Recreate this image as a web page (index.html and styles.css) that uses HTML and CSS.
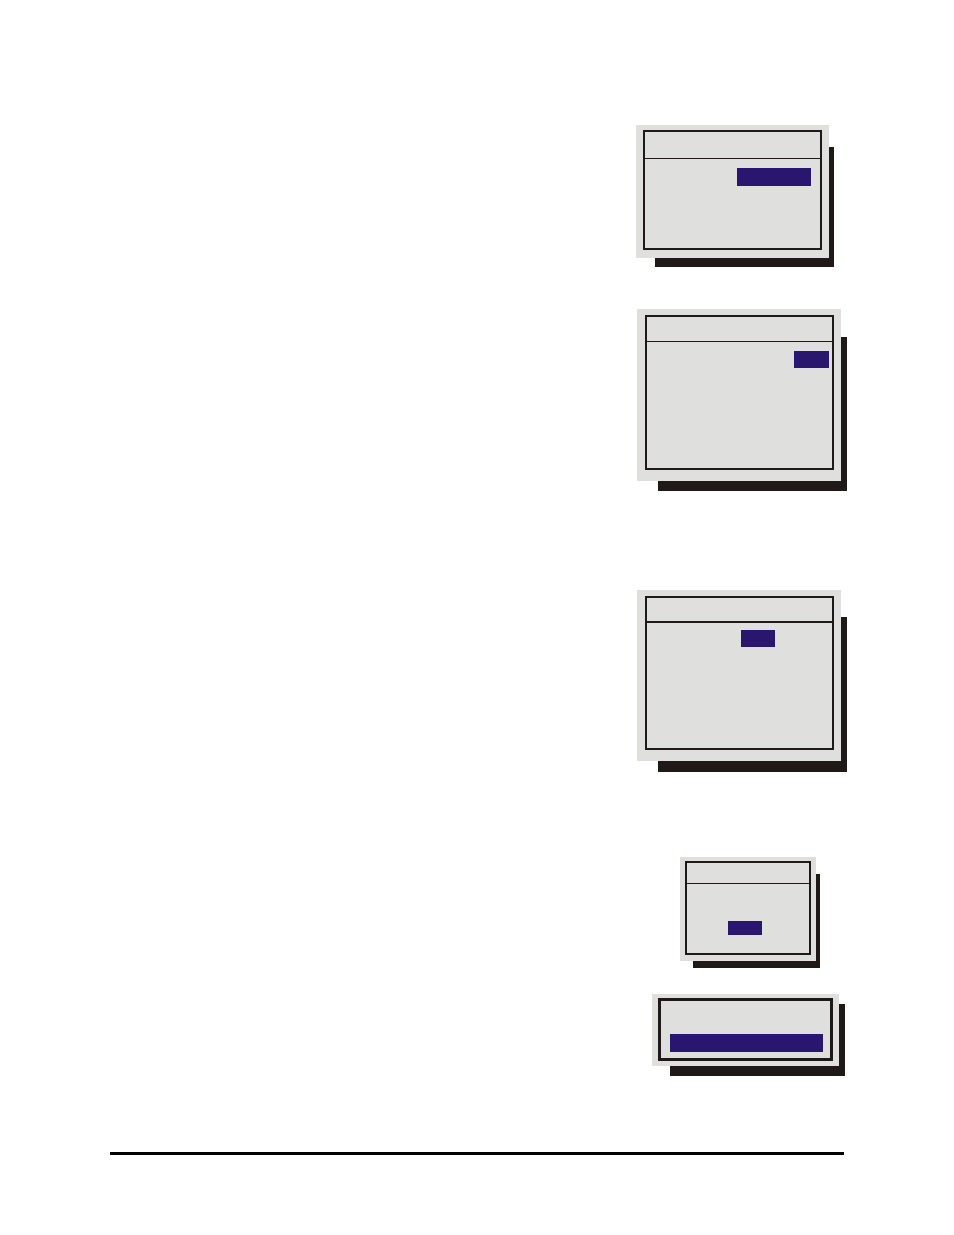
FILE: index.html
```
<!DOCTYPE html>
<html lang='en'>
<head>
	<meta charset='UTF-8'>
	<meta name='viewport' content='width=device-width, initial-scale=1.0'>
	<title>Menu Screens</title>
	<link rel="stylesheet" href="styles.css">
</head>
<body>
	<main class='screens'>
		<div class='screen screen-short'>
			<div class='panel'>
				<div class='frame'>
					<div class='title-bar'></div>
					<div class='highlight'></div>
				</div>
			</div>
		</div>

		<div class='screen screen-tall'>
			<div class='panel'>
				<div class='frame'>
					<div class='title-bar'></div>
					<div class='highlight'></div>
				</div>
			</div>
		</div>

		<div class='screen screen-tall-alt'>
			<div class='panel'>
				<div class='frame'>
					<div class='title-bar'></div>
					<div class='highlight'></div>
				</div>
			</div>
		</div>

		<div class='screen screen-small'>
			<div class='panel'>
				<div class='frame'>
					<div class='title-bar'></div>
					<div class='highlight'></div>
				</div>
			</div>
		</div>

		<div class='screen screen-wide'>
			<div class='panel'>
				<div class='frame'>
					<div class='highlight'></div>
				</div>
			</div>
		</div>
	</main>
	<hr class='footer-rule'>
</body>
</html>
```
FILE: styles.css
```
*{
	box-sizing:border-box;
}
body{
	margin:0;
	padding:125px 107px 80px 110px;
	background-color:white;
	font-family:"Liberation Sans", Arial, sans-serif;
}
.screens{
	display:flex;
	flex-direction:column;
	align-items:flex-end;
}
/* the shadow is the wrapper background, it shows below and right of the panel */
.screen{
	background-image:linear-gradient(#1f1a17, #1f1a17);
	background-repeat:no-repeat;
}
.panel{
	display:flex;
	background-color:#dfdfdd;
}
.frame{
	flex:1;
	display:flex;
	flex-direction:column;
	align-items:flex-start;
	border:2px solid #1f1a17;
}
.title-bar{
	align-self:stretch;
	height:25px;
	border-bottom:1px solid #1f1a17;
}
.highlight{
	background-color:#28166f;
}

.screen-short{
	margin:0 13px 42px 0;
	padding:0 5px 9px 0;
	background-position:19px 22px;
}
.screen-short .panel{
	width:193px;
	height:133px;
	padding:5px 7px 8px 7px;
}
.screen-short .title-bar{
	height:27px;
}
.screen-short .highlight{
	width:74px;
	height:18px;
	margin:9px 0 0 92px;
}

.screen-tall{
	margin-bottom:99px;
	padding:0 6px 10px 0;
	background-position:21px 28px;
}
.screen-tall .panel{
	width:204px;
	height:172px;
	padding:6px 7px 11px 8px;
}
.screen-tall .highlight{
	width:35px;
	height:17px;
	margin:9px 0 0 147px;
}

.screen-tall-alt{
	margin-bottom:85px;
	padding:0 6px 11px 0;
	background-position:21px 27px;
}
.screen-tall-alt .panel{
	width:204px;
	height:171px;
	padding:6px 7px 11px 8px;
}
.screen-tall-alt .title-bar{
	border-bottom-width:2px;
}
.screen-tall-alt .highlight{
	width:34px;
	height:17px;
	margin:7px 0 0 94px;
}

.screen-small{
	margin:0 27px 26px 0;
	padding:0 4px 7px 0;
	background-position:13px 17px;
}
.screen-small .panel{
	width:136px;
	height:104px;
	padding:4px 5px 6px 5px;
}
.screen-small .title-bar{
	height:21px;
}
.screen-small .highlight{
	width:34px;
	height:14px;
	margin:37px 0 0 41px;
}

.screen-wide{
	margin-right:2px;
	padding:0 6px 10px 0;
	background-position:18px 10px;
}
.screen-wide .panel{
	width:187px;
	height:72px;
	padding:4px 6px 5px 6px;
}
.screen-wide .frame{
	border-width:3px;
}
.screen-wide .highlight{
	width:153px;
	height:18px;
	margin:33px 0 0 9px;
}

.footer-rule{
	height:3px;
	margin:76px 3px 0 0;
	border:0;
	background-color:black;
}
```
